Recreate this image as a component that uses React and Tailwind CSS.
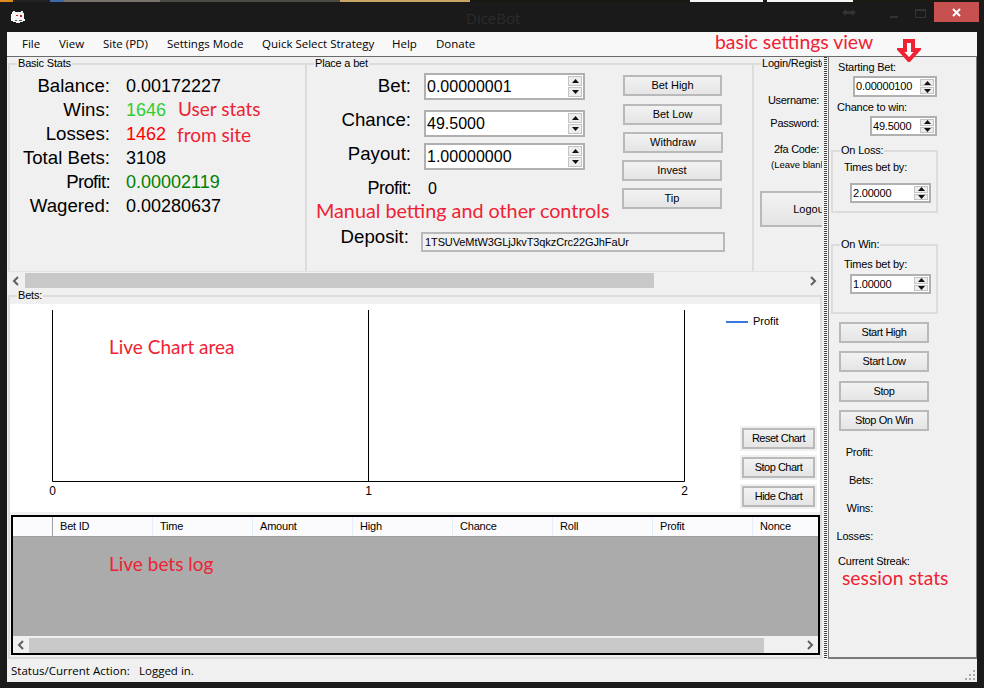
const sans = "font-['Liberation_Sans',Arial,sans-serif]";

// red notes that were painted on top of the screenshot
const Note = ({ className, children }) => (
  <div className={"absolute whitespace-nowrap font-['Lato',sans-serif] leading-[22px] text-[#ee2233] " + className}>
    {children}
  </div>
);

const Btn = ({ className = '', children }) => (
  <button className={"flex items-center justify-center border-2 border-[#b9b9b9] bg-gradient-to-b from-[#f2f2f2] to-[#e5e5e5] text-[11px] leading-none text-black " + className}>
    {children}
  </button>
);

const GroupBox = ({ title, className = '', children }) => (
  <fieldset className={"min-w-0 border-2 border-[#dcdcdc] " + className}>
    <legend className="ml-[7px] h-[13px] px-[1px] text-[11px] leading-[13px] tracking-[-0.2px] text-black">{title}</legend>
    {children}
  </fieldset>
);

const Tri = ({ down }) => (
  <svg width="7" height="4" viewBox="0 0 7 4">
    <path d={down ? 'M0 0h7L3.5 4z' : 'M0 4h7L3.5 0z'} fill="#111" />
  </svg>
);

const Spinner = ({ value, className = '', textClass = 'text-[16px]' }) => (
  <div className={"flex items-center border-2 border-[#b0b0b0] bg-white " + className}>
    <div className={"flex-1 pl-[1px] leading-none text-black " + textClass}>{value}</div>
    <div className="mr-[1px] flex h-full w-[14px] flex-col gap-[1px] py-[1px]">
      <div className="flex flex-1 items-center justify-center border border-[#c4c4c4] bg-[#ededed]"><Tri /></div>
      <div className="flex flex-1 items-center justify-center border border-[#c4c4c4] bg-[#ededed]"><Tri down /></div>
    </div>
  </div>
);

const Chevron = ({ left }) => (
  <svg width="10" height="10" viewBox="0 0 10 10">
    <path d={left ? 'M7 1L3 5l4 4' : 'M3 1l4 4-4 4'} fill="none" stroke="#5f5f5f" strokeWidth="2" />
  </svg>
);

const stats = [
  ['Balance:', '0.00172227', 'text-black'],
  ['Wins:', '1646', 'text-[#32cd32]'],
  ['Losses:', '1462', 'text-[#ff0000]'],
  ['Total Bets:', '3108', 'text-black'],
  ['Profit:', '0.00002119', 'text-[#008000]'],
  ['Wagered:', '0.00280637', 'text-black'],
];

const columns = ['Bet ID', 'Time', 'Amount', 'High', 'Chance', 'Roll', 'Profit', 'Nonce'];
const menu = [
  ['File', 'w-[37px]'],
  ['View', 'w-[44px]'],
  ['Site (PD)', 'w-[64px]'],
  ['Settings Mode', 'w-[95px]'],
  ['Quick Select Strategy', 'w-[130px]'],
  ['Help', 'w-[44px]'],
  ['Donate', 'w-[60px]'],
];

const App = () => {
  return (
    <div className={"relative flex h-[688px] w-[984px] flex-col overflow-hidden bg-[#1a1a1a] " + sans}>
      {/* desktop showing behind the window */}
      <div className="flex h-[2px] shrink-0 bg-[#1d1a12]">
        <div className="w-[13px] bg-[#e08a24]" />
        <div className="w-[37px] bg-[#23221f]" />
        <div className="w-[14px] bg-[#3f6aa8]" />
        <div className="w-[96px] bg-[#77736a]" />
        <div className="w-[180px] bg-[#4b4a45]" />
        <div className="w-[130px] bg-[#c8a560]" />
        <div className="w-[220px] bg-[#1a1712]" />
        <div className="w-[73px] bg-[#f5f5f5]" />
        <div className="ml-[4px] w-[86px] bg-[#f5f5f5]" />
      </div>

      {/* title bar */}
      <div className="flex h-[30px] shrink-0">
        <svg className="ml-[11px] mt-[8px]" width="14" height="13" viewBox="0 0 14 13">
          <path d="M2 1h2v1h6V1h2v2h1v6h1v2h-2v1H9v1H5v-1H2v-1H0V4h1V2h1z" fill="#f4f4f4" />
          <path d="M5 5h2v1H5zM9 5h2v2H9z" fill="#d02020" />
          <path d="M4 10h2v1H4zM8 10h3v1H8z" fill="#555" />
        </svg>
        <div className="ml-[441px] mt-[6px] w-[60px] font-['Open_Sans',sans-serif] text-[15px] leading-[20px] text-[#2c2c2c]">DiceBot</div>
        <svg className="ml-[316px] mt-[6px]" width="14" height="9" viewBox="0 0 14 9">
          <path d="M0 4.5L4 1v2h6V1l4 3.5L10 8V6H4v2z" fill="#333" />
        </svg>
        <div className="ml-[34px] mt-[14px] h-[2px] w-[8px] bg-[#333]" />
        <div className="ml-[17px] mt-[7px] h-[9px] w-[11px] border border-t-2 border-[#333]" />
        <div className="ml-[8px] flex h-[20px] w-[45px] items-center justify-center bg-[#c75050]">
          <svg width="9" height="9" viewBox="0 0 9 9">
            <path d="M1 1l7 7M8 1L1 8" stroke="#fff" strokeWidth="2" />
          </svg>
        </div>
      </div>

      <div className="mx-[7px] flex h-[650px] w-[970px] flex-col">
        {/* menu */}
        <div className="flex h-[24px] shrink-0 items-center bg-[#f8f8f8] pl-[15px] font-['Open_Sans',sans-serif] text-[11.5px] text-black">
          {menu.map(([label, w]) => (
            <div key={label} className={w}>{label}</div>
          ))}
        </div>

        <div className="flex h-[603px] border-t border-[#6b6b6b] bg-[#f0f0f0]">
          {/* main column */}
          <div className="w-[815px] shrink-0">
            <div className="flex h-[214px] overflow-hidden pl-[1px]">
              <GroupBox title="Basic Stats" className="h-[260px] w-[299px] shrink-0">
                <div className="mt-[4px] grid grid-cols-[100px_auto] gap-x-[16px] text-[18px] leading-[24px]">
                  {stats.map(([label, value, color]) => (
                    <div key={label} className="contents">
                      <div className={"whitespace-nowrap text-right text-[18.67px] text-black " + (label === 'Profit:' ? 'tracking-[-0.7px]' : '')}>{label}</div>
                      <div className={color}>{value}</div>
                    </div>
                  ))}
                </div>
              </GroupBox>

              <GroupBox title="Place a bet" className="h-[260px] w-[447px] shrink-0 border-l-0">
                <div className="flex">
                  <div className="w-[278px] pt-[3px]">
                    <div className="flex h-[27px] items-center">
                      <div className="w-[104px] pb-[1px] text-right text-[18.67px] text-black">Bet:</div>
                      <Spinner value="0.00000001" className="ml-[13px] h-[27px] w-[161px]" />
                    </div>
                    <div className="mt-[10px] flex h-[27px] items-center">
                      <div className="w-[104px] pb-[8px] text-right text-[18.67px] text-black">Chance:</div>
                      <Spinner value="49.5000" className="ml-[13px] h-[27px] w-[161px]" />
                    </div>
                    <div className="mt-[6px] flex h-[27px] items-center">
                      <div className="w-[104px] pb-[6px] text-right text-[18.67px] text-black">Payout:</div>
                      <Spinner value="1.00000000" className="ml-[13px] h-[27px] w-[161px]" />
                    </div>
                    <div className="mt-[8px] flex h-[21px] items-center text-[16px] text-black">
                      <div className="w-[104px] text-right text-[18px] tracking-[-0.5px]">Profit:</div>
                      <div className="ml-[17px]">0</div>
                    </div>
                  </div>
                  <div className="ml-[37px] flex w-[101px] flex-col pt-[5px]">
                    <Btn className="ml-[1px] h-[21px] w-[99px]">Bet High</Btn>
                    <Btn className="ml-[1px] mt-[8px] h-[21px] w-[99px]">Bet Low</Btn>
                    <Btn className="ml-[1px] mt-[7px] h-[21px] w-[100px]">Withdraw</Btn>
                    <Btn className="mt-[7px] h-[21px] w-[100px]">Invest</Btn>
                    <Btn className="mt-[7px] h-[21px] w-[100px]">Tip</Btn>
                  </div>
                </div>
                <div className="mt-[23px] flex h-[20px] items-center">
                  <div className="w-[102px] pb-[10px] text-right text-[18.67px] text-black">Deposit:</div>
                  <div className="ml-[12px] flex h-[20px] w-[304px] items-center border-2 border-[#b9b9b9] pl-[2px] text-[11px] tracking-[-0.1px] text-black">
                    1TSUVeMtW3GLjJkvT3qkzCrc22GJhFaUr
                  </div>
                </div>
              </GroupBox>

              <GroupBox title="Login/Register" className="h-[260px] w-[150px] shrink-0 border-x-0">
                <div className="w-[65px] whitespace-nowrap pt-[23px] text-right text-[11px] leading-[14px] tracking-[-0.3px] text-black">
                  <div>Username:</div>
                  <div className="mt-[9px]">Password:</div>
                  <div className="mt-[12px]">2fa Code:</div>
                </div>
                <div className="mt-[2px] whitespace-nowrap pl-[17px] text-[9.5px] leading-[14px] text-black">(Leave blank</div>
                <Btn className="ml-[6px] mt-[19px] h-[36px] w-[100px]">Logout</Btn>
              </GroupBox>
            </div>

            {/* horizontal scroll of the top panel */}
            <div className="flex h-[18px] items-center border-t border-[#e2e2e2]">
              <div className="flex w-[18px] justify-center"><Chevron left /></div>
              <div className="h-[15px] w-[629px] bg-[#c8c8c8]" />
              <div className="ml-auto flex w-[18px] justify-center"><Chevron /></div>
            </div>

            <GroupBox title="Bets:" className="ml-[1px] h-[370px] w-[814px]">
              {/* chart */}
              <div className="mt-[2px] flex h-[208px] w-[810px] bg-white">
                <svg width="716" height="208" className={"shrink-0 " + sans}>
                  <path d="M42.5 6V177.5H674.5V6M358.5 6V177.5" fill="none" stroke="#000" />
                  <text x="42.5" y="191" textAnchor="middle" fontSize="12">0</text>
                  <text x="358.5" y="191" textAnchor="middle" fontSize="12">1</text>
                  <text x="674.5" y="191" textAnchor="middle" fontSize="12">2</text>
                </svg>
                <div className="flex flex-1 flex-col pb-[5px]">
                  <div className="mt-[11px] flex h-[13px] items-center text-[11px] text-black">
                    <div className="h-[2px] w-[22px] bg-[#3a78dc]" />
                    <div className="ml-[5px]">Profit</div>
                  </div>
                  <div className="mt-auto flex flex-col gap-[8px] pl-[16px]">
                    <Btn className="h-[21px] w-[73px] tracking-[-0.5px] ring-2 ring-[#f0f0f0]">Reset Chart</Btn>
                    <Btn className="h-[21px] w-[73px] tracking-[-0.5px] ring-2 ring-[#f0f0f0]">Stop Chart</Btn>
                    <Btn className="h-[21px] w-[73px] tracking-[-0.5px] ring-2 ring-[#f0f0f0]">Hide Chart</Btn>
                  </div>
                </div>
              </div>

              {/* bets table */}
              <div className="ml-[1px] mt-[3px] flex h-[140px] w-[809px] flex-col border-2 border-black bg-[#ababab]">
                <div className="flex h-[20px] shrink-0 border-b border-[#a0a0a0] bg-[#fbfbfd] text-[11px] leading-[19px] tracking-[-0.2px] text-black">
                  <div className="w-[40px] shrink-0 border-r border-[#a0a0a0]" />
                  {columns.map((c) => (
                    <div key={c} className="w-[100px] shrink-0 border-r border-[#e6eefa] pl-[7px] last:w-[65px] last:border-r-0">{c}</div>
                  ))}
                </div>
                <div className="flex-1" />
                <div className="flex h-[17px] shrink-0 items-center border-t border-[#f0f0f0] bg-[#f0f0f0]">
                  <div className="flex w-[16px] justify-center"><Chevron left /></div>
                  <div className="h-[15px] w-[735px] bg-[#c8c8c8]" />
                  <div className="ml-auto flex w-[16px] justify-center"><Chevron /></div>
                </div>
              </div>
            </GroupBox>
          </div>

          {/* splitter */}
          <div className="flex w-[6px] shrink-0 justify-center">
            <div className="w-[3px] bg-[repeating-linear-gradient(to_bottom,#3a3a3a_0,#3a3a3a_1px,#ffffff_1px,#ffffff_2px)]" />
          </div>

          {/* basic settings */}
          <div className="w-[149px] shrink-0 border-x border-b-2 border-[#7a7a7a] text-[11px] leading-[13px] tracking-[-0.2px] text-black">
            <div className="ml-[9px] mt-[4px]">Starting Bet:</div>
            <Spinner value="0.00000100" textClass="text-[11px]" className="ml-[24px] mt-[2px] h-[21px] w-[84px]" />
            <div className="ml-[8px] mt-[4px]">Chance to win:</div>
            <Spinner value="49.5000" textClass="text-[11px]" className="ml-[41px] mt-[2px] h-[20px] w-[67px]" />

            <GroupBox title="On Loss:" className="ml-[2px] mt-[8px] h-[69px] w-[107px]">
              <div className="ml-[11px] mt-[4px]">Times bet by:</div>
              <Spinner value="2.00000" textClass="text-[11px]" className="ml-[17px] mt-[9px] h-[20px] w-[81px]" />
            </GroupBox>

            <GroupBox title="On Win:" className="ml-[2px] mt-[25px] h-[76px] w-[107px]">
              <div className="ml-[11px] mt-[7px]">Times bet by:</div>
              <Spinner value="1.00000" textClass="text-[11px]" className="ml-[17px] mt-[3px] h-[20px] w-[81px]" />
            </GroupBox>

            <Btn className="ml-[10px] mt-[8px] h-[21px] w-[90px] tracking-[-0.4px]">Start High</Btn>
            <Btn className="ml-[10px] mt-[8px] h-[21px] w-[90px] tracking-[-0.4px]">Start Low</Btn>
            <Btn className="ml-[10px] mt-[9px] h-[21px] w-[90px] tracking-[-0.4px]">Stop</Btn>
            <Btn className="ml-[10px] mt-[8px] h-[21px] w-[90px] tracking-[-0.4px]">Stop On Win</Btn>

            <div className="mt-[7px] w-[44px] text-right leading-[28px]">
              <div>Profit:</div>
              <div>Bets:</div>
              <div>Wins:</div>
              <div>Losses:</div>
            </div>
            <div className="ml-[9px] mt-[5px]">Current Streak:</div>
          </div>
        </div>

        {/* status bar */}
        <div className="relative flex h-[23px] items-center bg-[#f0f0f0] pl-[4px] font-['Open_Sans',sans-serif] text-[11.5px] text-black">
          <div className="w-[128px]">Status/Current Action:</div>
          <div>Logged in.</div>
          <svg className="absolute bottom-[1px] right-[1px]" width="11" height="11" viewBox="0 0 11 11">
            <path d="M8 0h2v2H8zM4 4h2v2H4zM8 4h2v2H8zM0 8h2v2H0zM4 8h2v2H4zM8 8h2v2H8z" fill="#a8a8a8" />
          </svg>
        </div>
      </div>

      {/* annotations */}
      <Note className="left-[178px] top-[98px] text-[19px]">User stats</Note>
      <Note className="left-[177px] top-[124px] text-[19px]">from site</Note>
      <Note className="left-[316px] top-[200px] text-[19.75px]">Manual betting and other controls</Note>
      <Note className="left-[109px] top-[336px] text-[19px]">Live Chart area</Note>
      <Note className="left-[109px] top-[553px] text-[19px]">Live bets log</Note>
      <Note className="left-[715px] top-[31px] text-[19.4px]">basic settings view</Note>
      <Note className="left-[842px] top-[567px] text-[19.3px]">session stats</Note>
      <svg className="absolute left-[897px] top-[39px]" width="24" height="23" viewBox="0 0 24 23">
        <path d="M8 2h8v9h5l-9 10L3 11h5z" fill="#fff" stroke="#ee2233" strokeWidth="4" />
      </svg>
    </div>
  );
};

export default App;
